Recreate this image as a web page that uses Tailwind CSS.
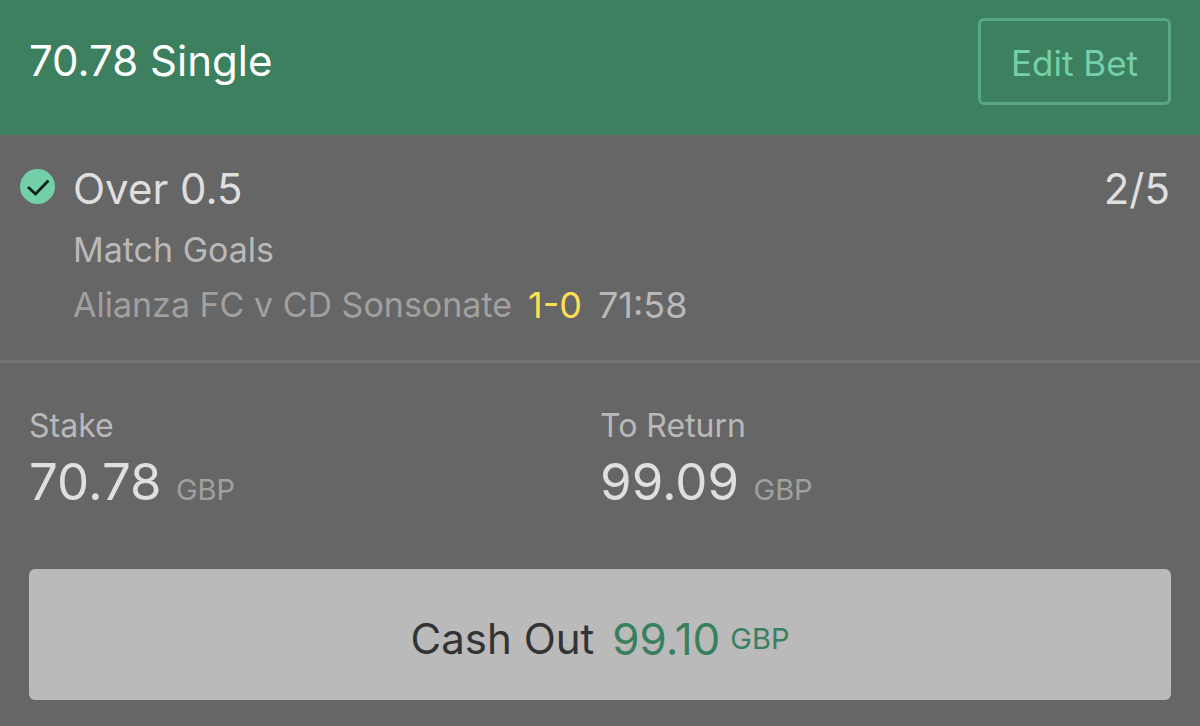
<!DOCTYPE html>
<html lang="en"><head><meta charset="utf-8"><title>Bet</title>
<script src="https://cdn.jsdelivr.net/npm/@tailwindcss/browser@4"></script></head>
<body class="min-h-screen bg-[#666666] font-['Inter',sans-serif]">
<header class="flex items-start justify-between bg-[#3d8060] px-[29px] pt-[18px] pb-[30px]">
<h1 class="pt-[15px] text-[42px] leading-[56px] text-white">70.78 Single</h1>
<button class="h-[87px] rounded-md border-3 border-[#59a685] px-[30px] pt-[3px] text-[35px] text-[#75cfa8]">Edit Bet</button>
</header>
<main>
<section class="flex gap-[18px] border-b-3 border-[#757575] pt-[27px] pb-[27px] pl-5 pr-[30px]">
<svg class="mt-[7px] size-[35px] shrink-0" viewBox="0 0 35 35" fill="none" aria-hidden="true"><circle cx="17.5" cy="17.5" r="17.5" fill="#73cfa8"/><path d="M8 18l7.500 7L28.500 11.500" stroke="#10231b" stroke-width="2.8"/></svg>
<div class="flex-1">
<div class="flex justify-between text-[42px] leading-[54px] text-[#dfdfdf]"><h2>Over 0.5</h2><span>2/5</span></div>
<p class="mt-[6px] text-[34px] leading-[55px] text-[#b9b9b9]">Match Goals</p>
<p class="flex gap-[16px] text-[34px] leading-[56px] text-[#a0a0a0]"><span>Alianza FC v CD Sonsonate</span><span class="text-[36px] text-[#ffdf53]">1-0</span><span class="text-[36px] text-[#b9b9b9]">71:58</span></p>
</div>
</section>
<section class="grid grid-cols-2 px-[29px] pt-[43px]">
<div><p class="text-[32px] leading-10 text-[#b9b9b9]">Stake</p><p class="text-[51px] leading-[72px] text-[#dfdfdf]">70.78 <span class="text-[29px] text-[#a0a0a0]">GBP</span></p></div>
<div><p class="text-[32px] leading-10 text-[#b9b9b9]">To Return</p><p class="text-[51px] leading-[72px] text-[#dfdfdf]">99.09 <span class="text-[29px] text-[#a0a0a0]">GBP</span></p></div>
</section>
<div class="px-[29px] pt-[43px] pb-[26px]"><button class="flex h-[131px] w-full items-center justify-center rounded-md bg-[#bababa] pt-[8px] text-[42px] text-[#333]">Cash Out <span class="ml-[18px] text-[44px] text-[#39805f]">99.10</span><span class="ml-[10px] text-[29px] text-[#39805f]">GBP</span></button></div>
</main>
</body></html>
